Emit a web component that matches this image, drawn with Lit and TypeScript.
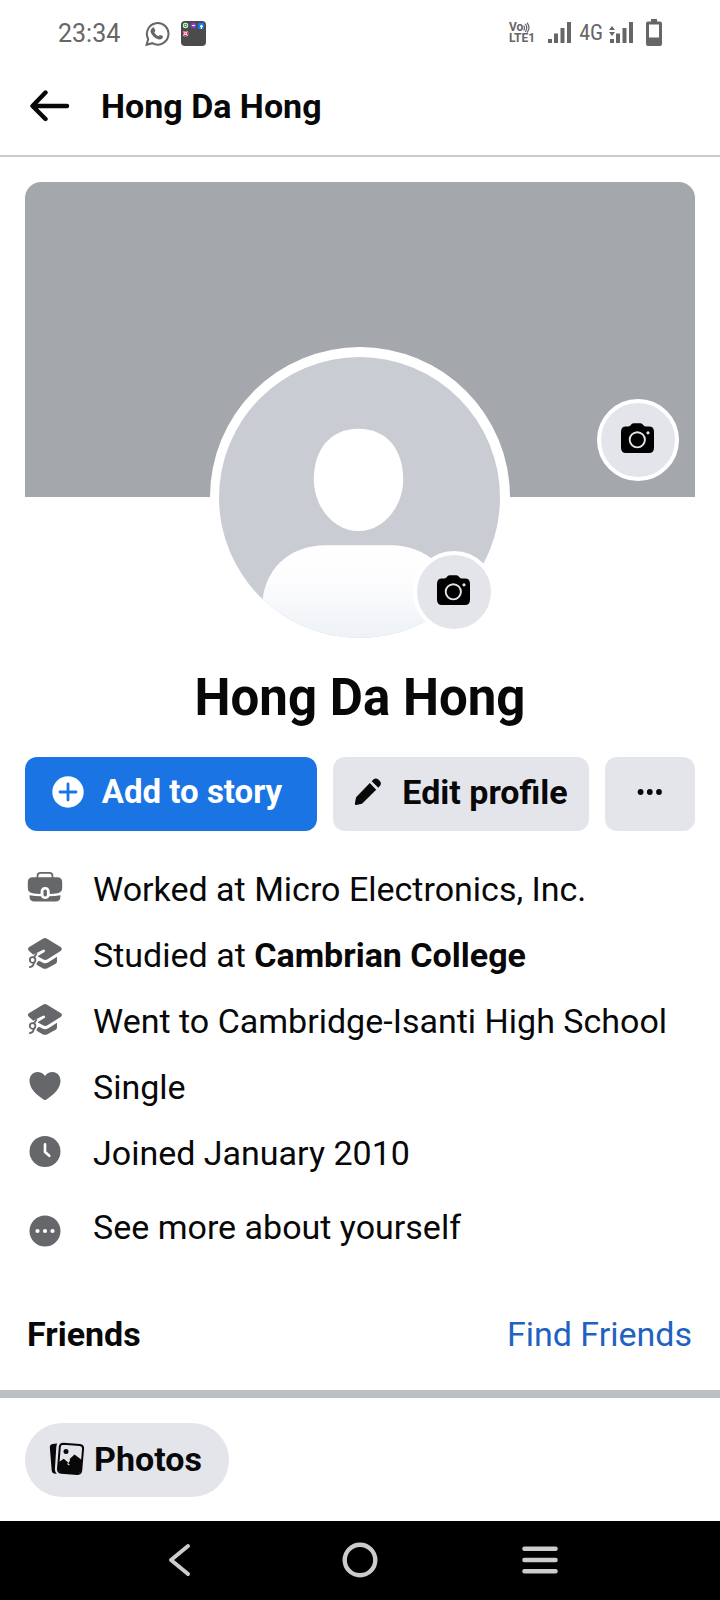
import { LitElement, html, css, svg } from "lit";
import { customElement } from "lit/decorators.js";

const arrowIcon = html`<svg width="40" height="32" viewBox="0 0 40 32" aria-hidden="true">
  <path d="M15.500 2.500 2.500 16 15.500 29M3 16H37" fill="none" stroke="#080809" stroke-width="4.400" stroke-linecap="round" stroke-linejoin="round"/>
</svg>`;

const whatsappIcon = html`<svg width="26" height="26" viewBox="0 0 26 26" aria-hidden="true">
  <path d="M1.600 23.800 3.200 18A10.800 10.800 0 1 1 7.300 22.200Z" fill="none" stroke="#666" stroke-width="2"/>
  <path d="M7.300 6.900c.4-.5 1.600-.6 1.900 0l1.100 2.500c.2.500-.8 1.400-1 1.900.8 1.700 2.200 3 4 3.900.6-.2 1.300-1.500 1.900-1.300l2.500 1.200c.5.400.1 1.900-.5 2.500-1 .9-2.500 1.200-4 .7-3.500-1.100-6-3.500-7.400-6.700-.6-1.700 0-3.700 1.500-4.700Z" fill="#666"/>
</svg>`;

const folderIcon = html`<svg width="25" height="25" viewBox="0 0 25 25" aria-hidden="true">
  <rect width="25" height="25" rx="4" fill="#4b4b4b"/>
  <circle cx="4.500" cy="4.500" r="2.700" fill="#fff"/><circle cx="4.500" cy="4.500" r="2" fill="#35b44a"/><circle cx="4.500" cy="4.500" r=".8" fill="#fff"/>
  <circle cx="12.500" cy="4.500" r="2.700" fill="#8a3ae0"/><path d="M11 4.500h3" stroke="#fff" stroke-width="1"/>
  <rect x="17" y="2" width="6" height="6" rx="1" fill="#1877f2"/><path d="M20.400 8V3.800M19 5.300h3" stroke="#fff" stroke-width="1.200"/>
  <rect x="2" y="10" width="5.200" height="5.200" rx="1.500" fill="#fff"/><rect x="2.700" y="10.700" width="3.800" height="3.800" rx="1" fill="none" stroke="#d6246e" stroke-width="1"/><circle cx="4.600" cy="12.600" r=".8" fill="#e0434b"/>
</svg>`;

const waves = html`<svg width="8" height="11" viewBox="0 0 8 11" aria-hidden="true">
  <path d="M.6 3.500q1.800 2.500 0 5M2.300 1.800q3 4 0 8M4 .6q4 5 0 10" fill="none" stroke="#666" stroke-width="1.200"/>
</svg>`;

const bars = svg`<path d="M0 17h4v4H0zM6 11.500h4V21H6zM12.500 6h4v15h-4zM19 0h4v21h-4z" fill="#666"/>`;
const signalIcon = html`<svg width="23" height="21" viewBox="0 0 23 21" aria-hidden="true">${bars}</svg>`;
const signalDataIcon = html`<svg width="24" height="21" viewBox="-1 0 24 21" aria-hidden="true">
  <path d="M0 17h4v4H0zM6 11.500h4V21H6zM12.500 6h4v15h-4zM19 0h4v21h-4z" fill="#666"/>
  <path d="M-1 8 2 4l3 4zM-1 10h6l-3 4z" fill="#666"/>
</svg>`;

const batteryIcon = html`<svg width="16" height="27" viewBox="0 0 16 27" aria-hidden="true">
  <path fill-rule="evenodd" d="M5 0h6v2.500h3a2 2 0 0 1 2 2V25a2 2 0 0 1-2 2H2a2 2 0 0 1-2-2V4.500a2 2 0 0 1 2-2h3zM3 5.500V18.500H13V5.500z" fill="#666"/>
</svg>`;

const cameraIcon = html`<svg width="34" height="30" viewBox="0 0 34 30" aria-hidden="true">
  <path d="M10.200 1.600Q11.400.3 13 .3H19Q20.600.3 21.800 1.600L22.600 2.500Q23.600 3.600 25 3.600H28Q33 3.600 33 9V24.500Q33 30 28 30H5Q0 30 0 24.500V9Q0 3.600 5 3.600H7Q8.400 3.600 9.400 2.500Z" fill="#000"/>
  <circle cx="16.300" cy="16.800" r="7.600" fill="none" stroke="#e4e5eb" stroke-width="1.900"/>
  <circle cx="27" cy="9.800" r="1.600" fill="#e4e5eb"/>
</svg>`;

const plusIcon = html`<svg width="32" height="32" viewBox="0 0 32 32" aria-hidden="true">
  <circle cx="16" cy="16" r="15.700" fill="#fff"/>
  <path d="M16 8v16M8 16h16" stroke="#1b74e4" stroke-width="2.800" stroke-linecap="round"/>
</svg>`;

const pencilIcon = html`<svg width="30" height="30" viewBox="0 0 30 30" aria-hidden="true">
  <path d="M15.800 6.100 22.200 12.700 8.800 26Q7.900 26.900 6.700 27.100L2.300 27.900Q.6 28.200.9 26.500L1.700 21.900Q1.900 20.500 2.800 19.600ZM17.700 4.200 19.400 2.400Q21.800.3 24.400 2.600L25.600 3.800Q28 6.300 26 8.800L24.300 10.700Z" fill="#080809"/>
</svg>`;

const dotsIcon = html`<svg width="26" height="8" viewBox="0 0 26 8" aria-hidden="true">
  <g fill="#080809"><circle cx="3.600" cy="4" r="2.900"/><circle cx="12.800" cy="4" r="2.900"/><circle cx="22" cy="4" r="2.900"/></g>
</svg>`;

const bagIcon = html`<svg width="36" height="36" viewBox="0 0 36 36" aria-hidden="true">
  <path d="M10.500 7V5Q10.500 1.900 13.500 1.900H22.500Q25.500 1.900 25.500 5V7" fill="none" stroke="#65676b" stroke-width="1.800"/>
  <path d="M6 6.300H30Q35.200 6.300 35.200 11.300V17Q35.200 21.500 30.500 22.200Q26.500 22.800 22.800 22.900V21.500Q22.800 16 18.200 16Q13.500 16 13.500 21.500V22.900Q9.500 22.800 5.500 22.200Q.8 21.500.8 17V11.300Q.8 6.300 6 6.300Z" fill="#65676b"/>
  <path d="M2.500 24.200Q8 25.300 14 25.300Q15 28 18.200 28Q21.400 28 22.300 25.300Q28 25.300 33.500 24.200V25.300Q33.500 30.500 28.300 30.500H7.700Q2.500 30.500 2.500 25.300Z" fill="#65676b"/>
  <path fill-rule="evenodd" d="M18.200 17.200a3 3 0 0 1 3 3v3.600a3 3 0 0 1-6 0v-3.600a3 3 0 0 1 3-3zM18.200 19a1.200 1.200 0 0 0-1.200 1.200v3.600a1.200 1.200 0 0 0 2.400 0v-3.600a1.200 1.200 0 0 0-1.200-1.200z" fill="#fff"/>
  <rect x="16.500" y="18.500" width="3.400" height="7" rx="1.700" fill="#65676b"/>
</svg>`;

const capIcon = html`<svg width="36" height="36" viewBox="0 0 36 36" aria-hidden="true">
  <path d="M16.300 1.500Q18 .7 19.700 1.500L34 10.300Q35.800 12 34 13.700L20.500 22.300Q18.500 23.600 16.500 22.600L10.500 19.200L17.500 15Q18.700 13.800 17.400 12.800Q16.600 12.300 15.500 12.900L6.300 17.800L1.800 13.700Q0 12 1.800 10.300Z" fill="#65676b"/>
  <path d="M12 23.700 16 25.700Q18.500 27 21 25.500L30 19.800V24.500Q30 25.700 29 26.400L20 31.400Q18 32.300 16 31.400L10 28Q9.300 27.500 9.500 26.500Q10 25 12 23.700Z" fill="#65676b"/>
  <circle cx="5.600" cy="23" r="2.800" fill="none" stroke="#65676b" stroke-width="1.800"/>
  <path d="M7 20.300 9.300 17M6.900 25.600Q6.500 29.500 2.800 30.200" fill="none" stroke="#65676b" stroke-width="1.800" stroke-linecap="round"/>
</svg>`;

const heartIcon = html`<svg width="36" height="36" viewBox="0 0 36 36" aria-hidden="true">
  <path d="M18 31Q16.800 31 15.500 29.800C8 24.500 2.500 19 2.500 11.800C2.500 6.500 6 3 10.400 3C13.500 3 16.300 4.300 18 7C19.700 4.300 22.500 3 25.600 3C30 3 33.500 6.500 33.500 11.800C33.500 19 28 24.500 20.500 29.800Q19.200 31 18 31Z" fill="#65676b"/>
</svg>`;

const clockIcon = html`<svg width="36" height="36" viewBox="0 0 36 36" aria-hidden="true">
  <circle cx="18" cy="16.500" r="15.500" fill="#65676b"/>
  <path d="M18 9.200V17L22.300 20.800" fill="none" stroke="#fff" stroke-width="2.600" stroke-linecap="round" stroke-linejoin="round"/>
</svg>`;

const moreIcon = html`<svg width="36" height="40" viewBox="0 0 36 40" aria-hidden="true">
  <circle cx="18" cy="24" r="15.500" fill="#65676b"/>
  <g fill="#fff"><circle cx="10.500" cy="24" r="2.100"/><circle cx="18" cy="24" r="2.100"/><circle cx="25.500" cy="24" r="2.100"/></g>
</svg>`;

const photosIcon = html`<svg width="36" height="34" viewBox="0 0 36 34" aria-hidden="true">
  <path d="M.8 5Q.8 2.500 3.400 2L8.200 1.600Q7.500 3 7.300 5L5.900 27.500Q5.900 30 7.800 31.700Q3.200 32.300 2.700 28.500Z" fill="#080809"/>
  <path d="M14.300 1.700 30.800 2.900Q34.300 3.300 34.100 6.500L32.200 28.700Q31.800 32 28.600 31.900L12.200 30.700Q8.900 30.200 9 27L10.800 4.700Q11.200 1.700 14.300 1.700Z" fill="none" stroke="#080809" stroke-width="2"/>
  <path d="M9.900 20 14.800 16.700 19.600 21 21 18.500 20.700 16.900 25.500 12.500 33.200 18.300 32 29 28.500 31.800 12 30.500 9.200 27Z" fill="#080809"/>
  <path d="M18.500 21.500 20.300 23" stroke="#e4e5eb" stroke-width="1.200"/>
  <circle cx="17" cy="9.500" r="2.500" fill="#080809"/>
</svg>`;

const portrait = html`<svg class="portrait" viewBox="0 0 280 280" role="img" aria-label="Profile picture">
  <defs>
    <linearGradient id="body" x1="0" y1="0" x2="0" y2="1">
      <stop offset="0" stop-color="#fff"/><stop offset=".35" stop-color="#fdfdfe"/><stop offset="1" stop-color="#eef2f6"/>
    </linearGradient>
  </defs>
  <rect width="280" height="280" fill="#c9ccd3"/>
  <path d="M139 71.500C167 71.500 183.500 92 183.500 122C183.500 150 163 173.500 139 173.500C115 173.500 94.500 150 94.500 122C94.500 92 111 71.500 139 71.500Z" fill="#fff"/>
  <path d="M106 187.500H172C205 187.500 236 212 236 250V280H43V250C43 212 70 187.500 106 187.500Z" fill="url(#body)"/>
</svg>`;

const facts = [
  { icon: bagIcon, text: html`Worked at Micro Electronics, Inc.` },
  { icon: capIcon, text: html`Studied at <b>Cambrian College</b>` },
  { icon: capIcon, text: html`Went to Cambridge-Isanti High School` },
  { icon: heartIcon, text: html`Single` },
  { icon: clockIcon, text: html`Joined January 2010` },
];

@customElement("app-root")
export class AppRoot extends LitElement {
  static styles = css`
    :host {
      display: flex;
      flex-direction: column;
      min-height: 100vh;
      background: #fff;
      color: #080809;
      font-family: Roboto, "Liberation Sans", sans-serif;
      font-size: 34px;
      line-height: 44px;
    }
    * { box-sizing: border-box; }
    svg { display: block; flex: none; }
    button {
      font: inherit;
      color: inherit;
      border: 0;
      padding: 0;
      background: none;
      cursor: pointer;
    }
    h1, h2, ul { margin: 0; padding: 0; }
    b { font-weight: 700; }

    .status {
      display: flex;
      align-items: center;
      height: 58px;
      padding: 10px 58px 0;
      color: #666;
      font-size: 25px;
      line-height: 30px;
    }
    .apps { display: flex; gap: 10px; margin-left: 25px; }
    .signals { display: flex; align-items: center; margin-left: auto; padding-bottom: 3px; }
    .volte { display: flex; flex-direction: column; font-size: 12px; line-height: 11px; font-weight: 700; }
    .volte-top { display: flex; }
    .signals > .sig { margin-left: 13px; }
    .network { font-family: "Liberation Sans Narrow", "Roboto Condensed", Roboto, sans-serif; font-size: 22px; margin: 0 6px 0 8px; }
    .battery { margin-left: 13px; }

    .bar {
      display: flex;
      align-items: center;
      gap: 31px;
      height: 99px;
      padding: 0 30px 2px;
      border-bottom: 2px solid #c9cccf;
    }
    .bar h2 { font-size: 34px; font-weight: 700; }

    .profile { padding: 25px 25px 0; }
    .cover {
      position: relative;
      height: 315px;
      border-radius: 16px 16px 0 0;
      background: #a4a7ab;
    }
    .camera {
      position: absolute;
      display: grid;
      place-items: center;
      width: 82px;
      height: 82px;
      border: 4px solid #fff;
      border-radius: 50%;
      background: #e4e5eb;
      padding-bottom: 4px;
    }
    .cover .camera { right: 16px; bottom: 16px; }
    .avatar {
      position: relative;
      width: 300px;
      height: 300px;
      margin: -150px auto 0;
      border-radius: 50%;
      background: #fff;
      padding: 10px 10px 9px 9px;
    }
    .avatar .camera { right: 15px; bottom: 14px; }
    .portrait { width: 100%; border-radius: 50%; }
    .name { margin: 21px 0 29px; text-align: center; font-size: 51px; line-height: 60px; font-weight: 700; }

    .actions { display: flex; gap: 16px; font-weight: 700; }
    .action {
      display: flex;
      align-items: center;
      justify-content: center;
      gap: 18px;
      height: 74px;
      border-radius: 12px;
      background: #e4e5eb;
      padding-bottom: 4px;
      white-space: nowrap;
    }
    .add { flex: 284; background: #1b74e4; color: #fff; font-size: 33px; padding-right: 8px; }
    .edit { flex: 256; }
    .more { width: 90px; }

    .facts { list-style: none; padding: 25px 27px 0; }
    .fact, .see-more { display: flex; align-items: center; gap: 30px; min-height: 66px; }
    .see-more { width: 100%; min-height: 82px; text-align: left; }

    .friends {
      display: flex;
      justify-content: space-between;
      padding: 44px 28px 34px 27px;
      border-bottom: 8px solid #bcc0c4;
    }
    .friends h2 { font-size: 34px; font-weight: 700; }
    .friends a { color: #1f62bf; text-decoration: none; }

    .tabs { padding: 25px 25px 24px; }
    .chip {
      display: flex;
      align-items: center;
      gap: 9px;
      height: 74px;
      padding: 0 27px 2px 24px;
      border-radius: 37px;
      background: #e4e5eb;
      font-weight: 700;
    }

    .nav {
      display: grid;
      grid-template-columns: repeat(3, 1fr);
      height: 79px;
      margin-top: auto;
      padding: 0 12.5% 2px;
      background: #000;
    }
    .nav button { display: grid; place-items: center; }
  `;

  render() {
    return html`
      <div class="status">
        <span>23:34</span>
        <div class="apps">${whatsappIcon}${folderIcon}</div>
        <div class="signals">
          <div class="volte">
            <span class="volte-top">Vo${waves}</span>
            <span>LTE1</span>
          </div>
          <span class="sig">${signalIcon}</span>
          <span class="network">4G</span>
          ${signalDataIcon}
          <span class="battery">${batteryIcon}</span>
        </div>
      </div>

      <header class="bar">
        <button aria-label="Back">${arrowIcon}</button>
        <h2>Hong Da Hong</h2>
      </header>

      <section class="profile">
        <div class="cover"><button class="camera" aria-label="Edit cover photo">${cameraIcon}</button></div>
        <div class="avatar">
          ${portrait}
          <button class="camera" aria-label="Edit profile picture">${cameraIcon}</button>
        </div>
        <h1 class="name">Hong Da Hong</h1>
        <div class="actions">
          <button class="action add">${plusIcon}<span>Add to story</span></button>
          <button class="action edit">${pencilIcon}<span>Edit profile</span></button>
          <button class="action more" aria-label="More options">${dotsIcon}</button>
        </div>
      </section>

      <ul class="facts">
        ${facts.map((f) => html`<li class="fact">${f.icon}<span>${f.text}</span></li>`)}
        <li><button class="see-more">${moreIcon}<span>See more about yourself</span></button></li>
      </ul>

      <section class="friends">
        <h2>Friends</h2>
        <a href="#friends">Find Friends</a>
      </section>

      <div class="tabs">
        <button class="chip">${photosIcon}<span>Photos</span></button>
      </div>

      <nav class="nav">
        <button aria-label="Back">
          <svg width="24" height="34" viewBox="0 0 24 34"><path d="M20 3 3 17 20 31" fill="none" stroke="#ccc" stroke-width="4" stroke-linecap="round" stroke-linejoin="round"/></svg>
        </button>
        <button aria-label="Home">
          <svg width="36" height="36" viewBox="0 0 36 36"><circle cx="18" cy="18" r="15.300" fill="none" stroke="#ccc" stroke-width="4.400"/></svg>
        </button>
        <button aria-label="Recent apps">
          <svg width="36" height="30" viewBox="0 0 36 30"><path d="M2.500 3.700H33.500M2.500 15H33.500M2.500 26.300H33.500" stroke="#ccc" stroke-width="4.600" stroke-linecap="round"/></svg>
        </button>
      </nav>
    `;
  }
}
